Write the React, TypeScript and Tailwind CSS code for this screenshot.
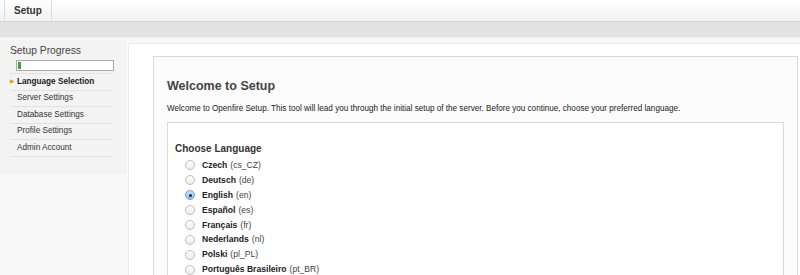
import React from "react";

const steps = [
  "Language Selection",
  "Server Settings",
  "Database Settings",
  "Profile Settings",
  "Admin Account",
];

const languages = [
  { name: "Czech", code: "cs_CZ" },
  { name: "Deutsch", code: "de" },
  { name: "English", code: "en" },
  { name: "Español", code: "es" },
  { name: "Français", code: "fr" },
  { name: "Nederlands", code: "nl" },
  { name: "Polski", code: "pl_PL" },
  { name: "Português Brasileiro", code: "pt_BR" },
];

function Radio({ checked }: { checked: boolean }) {
  if (checked) {
    return (
      <span className="flex h-[10px] w-[10px] shrink-0 items-center justify-center rounded-full border border-[#6f9fd8] bg-gradient-to-b from-[#cfe3fb] to-[#8dbcf0]">
        <span className="h-[3px] w-[3px] rounded-full bg-[#1d2b3c]" />
      </span>
    );
  }
  return (
    <span className="h-[10px] w-[10px] shrink-0 rounded-full border border-[#bdbdbd] bg-gradient-to-b from-[#ffffff] to-[#ececec]" />
  );
}

export default function App() {
  return (
    <div className="h-[275px] w-[800px] overflow-hidden bg-[#f8f8f8] font-['Liberation_Sans',Arial,sans-serif] text-[#333]">
      {/* top bar */}
      <div className="flex h-[22px] border-b border-[#d4d4d4] bg-gradient-to-b from-[#ffffff] to-[#f1f1f1] pl-[4px]">
        <div className="flex items-center border-x border-[#dcdcdc] px-[9px] text-[10px] font-bold text-[#333]">
          Setup
        </div>
      </div>
      <div className="h-[16px] border-b border-[#ececec] bg-[#e2e2e2]" />

      <div className="flex pt-[2px]">
        {/* sidebar */}
        <div className="h-[134px] w-[128px] shrink-0 border-r border-[#fdfdfd] bg-[#f3f3f3] pl-[10px] pr-[14px] pt-[5px]">
          <div className="text-[10.3px] leading-[12px] text-[#444]">Setup Progress</div>
          <div className="ml-[6px] mt-[3px] h-[11px] w-[98px] border border-[#a9a9a9] bg-white p-[1px]">
            <div className="h-full w-[3px] bg-[#3fa33a]" />
          </div>
          <div className="mt-[2px] border-t border-[#e2e2e2]" />
          {steps.map((s, i) => (
            <div
              key={s}
              className="flex h-[16.5px] items-center border-b border-[#e2e2e2] text-[8.2px]"
            >
              <span className="w-[7px] text-[6px] text-[#e0a100]">{i === 0 ? "▶" : ""}</span>
              <span className={i === 0 ? "font-bold text-[#222]" : "text-[#333]"}>{s}</span>
            </div>
          ))}
        </div>

        {/* main */}
        <div className="mt-[3px] h-[240px] flex-1 border-l border-t border-[#ebebeb] bg-white pl-[24px] pr-[2px] pt-[12px]">
          <div className="h-[240px] border border-[#d9d9d9] bg-[#fcfcfc] px-[13px]">
            <h1 className="mt-[21px] text-[12.5px] font-bold leading-[16px] text-[#444]">
              Welcome to Setup
            </h1>
            <p className="mt-[9px] text-[8.13px] leading-[11px] text-[#222]">
              Welcome to Openfire Setup. This tool will lead you through the initial setup of the server. Before you continue, choose your preferred language.
            </p>
            <div className="mt-[8px] h-[200px] border border-[#d9d9d9] bg-white px-[7px] pt-[20px]">
              <div className="text-[10px] font-bold leading-[12px] text-[#333]">Choose Language</div>
              <div className="mt-[3px]">
                {languages.map((l) => (
                  <div key={l.code} className="flex h-[14.9px] items-center pl-[10px] text-[8.6px] text-[#222]">
                    <Radio checked={l.code === "en"} />
                    <span className="ml-[7px] font-bold">{l.name}</span>
                    <span className="ml-[3px] text-[#444]">({l.code})</span>
                  </div>
                ))}
              </div>
            </div>
          </div>
        </div>
      </div>
    </div>
  );
}
